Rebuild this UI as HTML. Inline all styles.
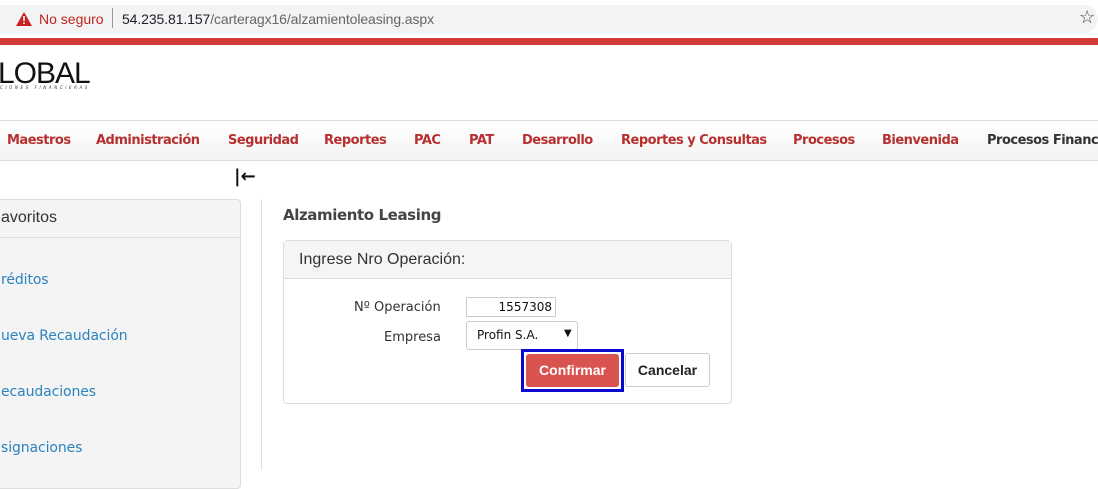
<!DOCTYPE html>
<html><head><meta charset="utf-8"><style>
*{margin:0;padding:0;box-sizing:border-box}
body{width:1098px;height:470px;overflow:hidden;background:#fff;font-family:"DejaVu Sans","Liberation Sans",sans-serif;position:relative}
.abs{position:absolute}
.url{left:0;top:5px;width:1098px;height:28px;background:#f1f3f4;border-radius:0 14px 14px 0;font-family:"Liberation Sans",sans-serif;font-size:14px}
.nav{left:0;top:120px;width:1098px;height:41px;background:linear-gradient(#fff,#f3f3f3);border-top:1px solid #ddd;border-bottom:1px solid #ddd}
.nav span{position:absolute;top:12px;font-size:13px;font-weight:bold;color:#b5302e;letter-spacing:-0.5px;white-space:nowrap}
.side{left:-10px;top:199px;width:251px;height:290px;background:#f4f4f4;border:1px solid #ddd;border-radius:4px}
.side a{position:absolute;left:10px;color:#2a83bd;font-size:14px;letter-spacing:-0.1px}
.lbl{font-size:13px;color:#333;position:absolute}
</style></head><body>
<div class="abs url">
 <svg class="abs" style="left:16px;top:7px" width="16" height="14" viewBox="0 0 16 14"><path d="M8 0L16 14H0Z" fill="#c5221f"/><rect x="7.2" y="4" width="1.6" height="5" fill="#fff"/><rect x="7.2" y="10.3" width="1.6" height="1.6" fill="#fff"/></svg>
 <span class="abs" style="left:39px;top:6px;color:#c5221f">No seguro</span>
 <span class="abs" style="left:112px;top:3px;width:1px;height:20px;background:#999"></span>
 <span class="abs" style="left:122px;top:6px;color:#202124;letter-spacing:-0.1px">54.235.81.157<span style="color:#666">/carteragx16/alzamientoleasing.aspx</span></span>
 <span class="abs" style="left:1079px;top:2px;font-size:18px;color:#444">☆</span>
</div>
<div class="abs" style="left:0;top:38px;width:1098px;height:7px;background:#d13a36"></div>
<div class="abs" style="left:-2px;top:57px;font-family:'Liberation Sans',sans-serif;font-size:30px;letter-spacing:-1px;color:#111">LOBAL</div>
<div class="abs" style="left:0;top:85px;font-size:4px;letter-spacing:2.6px;color:#333;font-style:italic">CIONES FINANCIERAS</div>
<div class="abs nav">
<span style="left:7px">Maestros</span><span style="left:96px">Administración</span><span style="left:228px">Seguridad</span><span style="left:324px">Reportes</span><span style="left:414px">PAC</span><span style="left:469px">PAT</span><span style="left:522px">Desarrollo</span><span style="left:621px">Reportes y Consultas</span><span style="left:793px">Procesos</span><span style="left:882px">Bienvenida</span><span style="left:987px;color:#333">Procesos Financieros</span>
</div>
<div class="abs" style="left:234px;top:166px;font-size:18px;font-weight:bold;color:#111">|←</div>
<div class="abs side">
 <div class="abs" style="left:0;top:0;width:249px;height:38px;border-bottom:1px solid #ddd"></div>
 <span class="abs" style="left:10px;top:9px;font-family:'Liberation Sans',sans-serif;font-size:16px;color:#333">avoritos</span>
 <a style="top:72px">réditos</a><a style="top:128px">ueva Recaudación</a><a style="top:184px">ecaudaciones</a><a style="top:240px">signaciones</a>
</div>
<div class="abs" style="left:261px;top:199px;width:1px;height:271px;background:#ddd"></div>
<div class="abs" style="left:283px;top:206px;font-size:15px;font-weight:bold;color:#444;letter-spacing:-0.4px">Alzamiento Leasing</div>
<div class="abs" style="left:283px;top:240px;width:449px;height:164px;border:1px solid #ddd;border-radius:4px">
 <div class="abs" style="left:0;top:0;width:447px;height:38px;background:#f5f5f5;border-bottom:1px solid #ddd"></div>
 <span class="abs" style="left:15px;top:10px;font-family:'Liberation Sans',sans-serif;font-size:16px;color:#333">Ingrese Nro Operación:</span>
 <span class="lbl" style="left:70px;top:59px">Nº Operación</span>
 <div class="abs" style="left:182px;top:56px;width:90px;height:20px;border:1px solid #ccc;font-size:12px;text-align:right;padding:2px 3px;color:#111">1557308</div>
 <span class="lbl" style="left:100px;top:89px">Empresa</span>
 <div class="abs" style="left:182px;top:80px;width:112px;height:29px;border:1px solid #ccc;border-radius:3px;font-size:12px;padding:6px 10px;color:#111">Profin S.A.<span class="abs" style="left:97px;top:6px;font-size:10px">▼</span></div>
 <div class="abs" style="left:237px;top:108px;width:103px;height:43px;border:3px solid #0a0acf"></div>
 <div class="abs" style="left:242px;top:113px;width:93px;height:33px;background:#d9534f;border-radius:3px;color:#fff;font-family:'Liberation Sans',sans-serif;font-weight:bold;font-size:14px;text-align:center;line-height:33px">Confirmar</div>
 <div class="abs" style="left:341px;top:112px;width:85px;height:34px;border:1px solid #ccc;border-radius:3px;color:#222;font-family:'Liberation Sans',sans-serif;font-weight:bold;font-size:14px;text-align:center;line-height:32px">Cancelar</div>
</div>
</body></html>
